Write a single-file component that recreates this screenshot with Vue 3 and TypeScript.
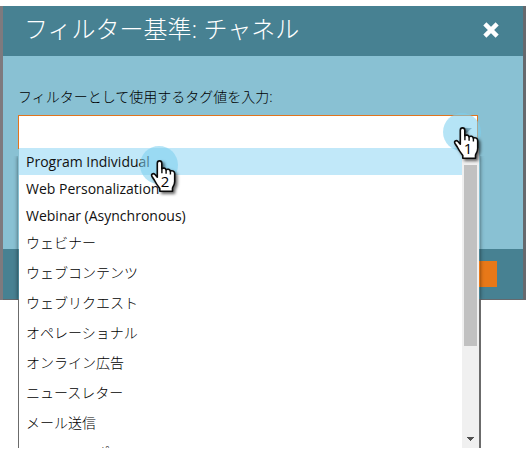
<script setup lang="ts">
const options: string[] = [
  'Program Individual',
  'Web Personalization',
  'Webinar (Asynchronous)',
  'ウェビナー',
  'ウェブコンテンツ',
  'ウェブリクエスト',
  'オペレーショナル',
  'オンライン広告',
  'ニュースレター',
  'メール送信',
  'リストインポート',
]
const isLatin = (s: string): boolean => /^[\x20-\x7e]+$/.test(s)
const steps: number[] = [1, 2]
</script>

<template>
  <div class="screen">
    <div class="backdrop">
      <section class="dialog">
        <header class="head">
          <h1>フィルター基準: チャネル</h1>
          <svg class="close" width="16" height="16" viewBox="0 0 16 16">
            <path d="M3.4 3.4L12.6 12.6M12.6 3.4L3.4 12.6" stroke="#fff" stroke-width="4.4" stroke-linecap="square" />
          </svg>
        </header>
        <div class="body">
          <label>フィルターとして使用するタグ値を入力:</label>
          <div class="combo">
            <svg width="11" height="5" viewBox="0 0 11 5"><path d="M0 0H11L5.5 5Z" fill="#7f8d96" /></svg>
          </div>
        </div>
        <footer class="foot"><div class="apply"></div></footer>
      </section>
    </div>

    <div class="dropshade"></div>
    <div class="dropdown">
      <ul>
        <li v-for="(o, i) in options" :key="o" :class="{ latin: isLatin(o), active: i === 0 }">{{ o }}</li>
      </ul>
      <div class="scrollbar">
        <div class="thumb"></div>
        <svg width="7" height="4" viewBox="0 0 7 4"><path d="M0 0H7V1H6V2H5V3H4V4H3V3H2V2H1V1H0Z" fill="#505050" /></svg>
      </div>
    </div>

    <div v-for="n in steps" :key="n" class="pointer" :class="'step' + n">
      <div class="halo"></div>
      <svg class="hand" width="30" height="38" viewBox="-1 -1 30 38">
        <path
          d="M6.3 17.2V3.2C6.3 .1 10.8 .1 10.8 3.2V8.8C12 7.6 14.5 7.9 15 9.8C16.5 8.7 18.8 9.2 19.3 11.1C21.5 10.1 23.7 11.3 23.7 13.7V21.5C23.7 25 21.8 26.3 21.5 28.2V31.2H8.8V28.5C6.5 25.5 4.5 22.5 3.3 20L1 16.5C-.3 14.1 2.2 12.8 4 14.5Z"
          fill="#fff" stroke="#0b0b0b" stroke-width="1.6" stroke-linejoin="round"
        />
        <path d="M10.9 8.5V13.2M15.1 9.8V13.8M19.4 11.1V14.4" stroke="#0b0b0b" stroke-width="1.4" fill="none" />
      </svg>
      <span class="num">{{ n }}</span>
    </div>
  </div>
</template>

<style>
body { margin: 0; background: #fff; }
</style>

<style scoped>
.screen {
  display: flow-root;
  position: relative;
  width: 531px;
  height: 463px;
  overflow: hidden;
  background: #fff;
  font-family: 'Open Sans', 'Noto Sans CJK JP', sans-serif;
  color: #111;
}
.backdrop {
  box-sizing: border-box;
  width: 526px;
  height: 294px;
  margin-top: 6px;
  padding: 0 3px;
  background: linear-gradient(90deg, #7e7a7e 0 3px, #66696d 3px);
}
.dialog { width: 520px; height: 293px; display: flex; flex-direction: column; }
.head {
  height: 50px;
  box-sizing: border-box;
  padding: 0 24px 0 21px;
  display: flex;
  justify-content: space-between;
  align-items: flex-start;
  background: #478192;
}
h1 {
  margin: 0;
  font-size: 24px;
  line-height: 46px;
  font-weight: 300;
  color: #fff;
  white-space: nowrap;
}
.close { margin-top: 16px; }
.body { height: 193px; background: #89c1d3; box-sizing: border-box; padding: 31px 0 0 15px; }
label { display: block; font-size: 14px; line-height: 20px; height: 28px; font-weight: 300; white-space: nowrap; color: #000; }
.combo {
  box-sizing: border-box;
  width: 460px;
  height: 34px;
  border: 1px solid #e0751f;
  border-bottom: 0;
  background: #fff;
  display: flex;
  justify-content: flex-end;
  padding: 12px 5px 0 0;
}
.foot { height: 50px; background: #478192; display: flex; justify-content: flex-end; padding: 12px 26px 0 0; box-sizing: border-box; }
.apply { width: 60px; height: 26px; background: #e87818; }
.dropshade {
  position: absolute;
  left: 18px;
  top: 300px;
  width: 463px;
  height: 148px;
  background: #6b6b6b;
}
.dropshade::before {
  content: '';
  position: absolute;
  left: 0;
  top: -144px;
  width: 462px;
  height: 144px;
  box-shadow: 0 0 4px rgba(0, 0, 0, 0.55);
  clip-path: inset(0 -5px 0 -5px);
}
.dropdown {
  position: absolute;
  left: 19px;
  top: 148px;
  width: 460px;
  height: 300px;
  overflow: hidden;
  display: flex;
  background: #fff;
}
ul { margin: 0; padding: 0; list-style: none; width: 443px; }
li { height: 30px; line-height: 28px; padding-left: 7px; font-size: 14px; font-weight: 300; white-space: nowrap; box-sizing: border-box; color: #000; }
li.latin { height: 27px; line-height: 27px; font-weight: 400; color: #111; }
li.active { background: #c1e8f9; }
.scrollbar {
  width: 17px;
  display: flex;
  flex-direction: column;
  align-items: center;
  background: #f0f0f0;
}
.thumb { width: 13px; height: 181px; margin: 17px 0 91px; background: #c1c1c1; flex: none; }
.pointer { position: absolute; width: 38px; height: 48px; }
.step1 { left: 443px; top: 113px; }
.step2 { left: 140px; top: 146px; }
.halo { width: 38px; height: 38px; border-radius: 50%; background: rgba(125, 208, 239, 0.57); }
.hand { position: absolute; left: 10px; top: 13px; filter: drop-shadow(2px 2px 1.5px rgba(0, 0, 0, 0.6)); }
.num { position: absolute; left: 19px; top: 26px; width: 12px; text-align: center; font-size: 15px; line-height: 19px; color: #000; }
</style>
